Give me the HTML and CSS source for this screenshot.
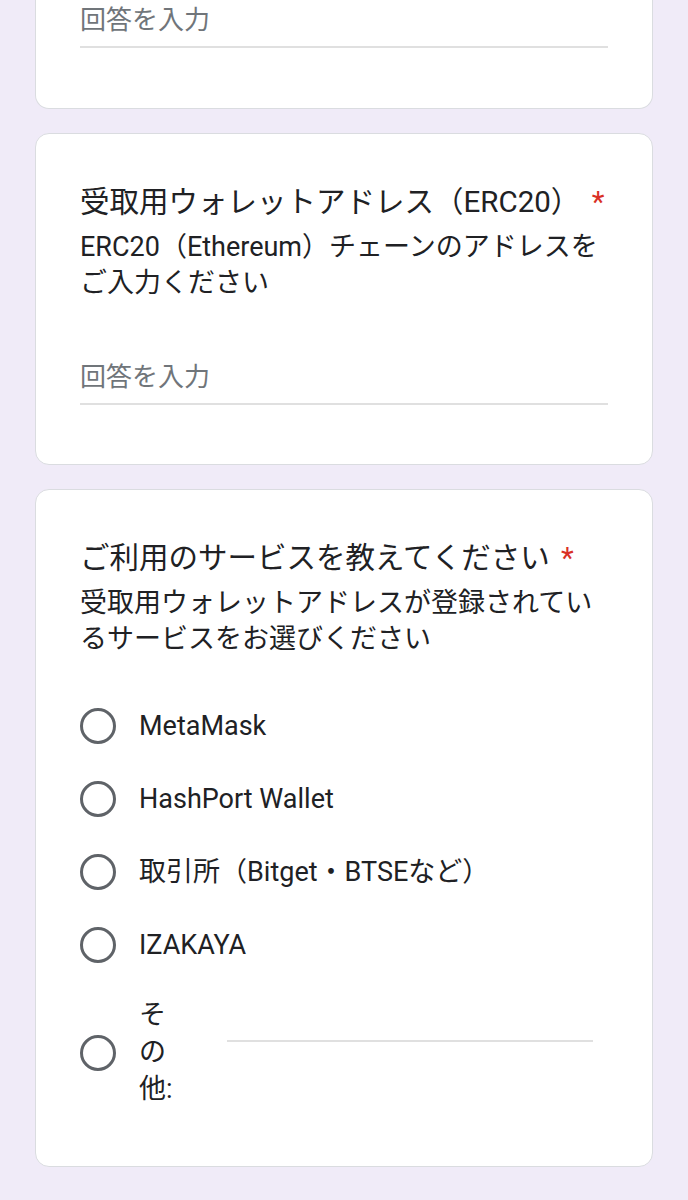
FILE: index.html
```html
<!DOCTYPE html>
<html lang="ja">
<head>
<meta charset="utf-8">
<title>フォーム</title>
<link rel="stylesheet" href="styles.css">
</head>
<body>
<main class="form">
  <section class="card card-cut">
    <div class="text-input"><span class="placeholder">回答を入力</span></div>
  </section>

  <section class="card">
    <h2 class="q-title">受取用ウォレットアドレス（ERC20） <span class="req">*</span></h2>
    <p class="q-desc">ERC20（Ethereum）チェーンのアドレスをご入力ください</p>
    <div class="text-input spaced"><span class="placeholder">回答を入力</span></div>
  </section>

  <section class="card card-radio">
    <h2 class="q-title">ご利用のサービスを教えてください <span class="req">*</span></h2>
    <p class="q-desc">受取用ウォレットアドレスが登録されているサービスをお選びください</p>
    <ul class="options">
      <li class="option"><span class="radio"></span><span class="opt-label">MetaMask</span></li>
      <li class="option"><span class="radio"></span><span class="opt-label">HashPort Wallet</span></li>
      <li class="option"><span class="radio"></span><span class="opt-label">取引所（Bitget・BTSEなど）</span></li>
      <li class="option"><span class="radio"></span><span class="opt-label">IZAKAYA</span></li>
      <li class="option option-other"><span class="radio"></span><span class="opt-label other-label">その他:</span><span class="other-field"></span></li>
    </ul>
  </section>
</main>
</body>
</html>
```

FILE: styles.css
```css
html, body {
  margin: 0;
  padding: 0;
}
body {
  background: #f0ebf8;
  font-family: Roboto, "Noto Sans CJK JP", sans-serif;
  color: #202124;
  overflow: hidden;
}
.form {
  padding: 0 35px;
  display: flex;
  flex-direction: column;
  gap: 24px;
}
.card {
  background: #fff;
  border: 1px solid #dadce0;
  border-radius: 14px;
  padding: 47px 44px 59px;
}
.card-cut {
  border-top: none;
  border-radius: 0 0 14px 14px;
  padding-top: 2px;
  padding-bottom: 60px;
}
.q-title {
  margin: 0;
  font-size: 29.5px;
  font-weight: 400;
  line-height: 42px;
}
.req {
  color: #d93025;
  margin-left: 4px;
}
.q-desc {
  margin: 6px 0 0;
  font-size: 27px;
  line-height: 36px;
}
.text-input {
  border-bottom: 2px solid #e0e0e0;
  padding-bottom: 8px;
}
.text-input.spaced {
  margin-top: 58px;
}
.placeholder {
  display: block;
  font-size: 26px;
  line-height: 36px;
  color: #70757a;
}
.card-radio {
  padding-bottom: 42px;
}
.options {
  list-style: none;
  margin: 32px 0 0;
  padding: 0;
}
.option {
  display: flex;
  align-items: center;
  height: 73px;
  padding: 0;
}
.option-other {
  height: auto;
  padding: 16px 0;
}
.radio {
  flex: none;
  box-sizing: border-box;
  width: 36px;
  height: 36px;
  border: 3px solid #5f6368;
  border-radius: 50%;
}
.opt-label {
  margin-left: 23px;
  font-size: 27px;
  line-height: 36px;
}
.other-label {
  width: 40px;
  line-height: 37px;
}
.other-field {
  flex: 1;
  height: 0;
  border-top: 2px solid #e0e0e0;
  margin: 0 15px 24px 48px;
}
```
